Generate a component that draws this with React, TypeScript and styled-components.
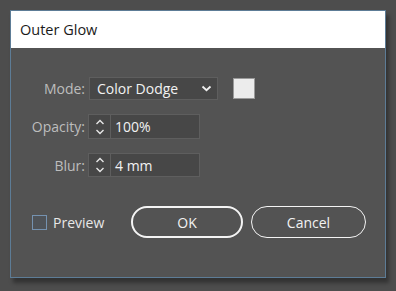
import React from "react";
import styled, { createGlobalStyle } from "styled-components";

const Global = createGlobalStyle`
  html, body {
    margin: 0;
    padding: 0;
    background: #4d4d4d;
    width: 396px;
    height: 291px;
    overflow: hidden;
  }
  * { box-sizing: border-box; }
`;

const Page = styled.div`
  padding: 10px 0 0 10px;
  font-family: "Open Sans", "Noto Sans", sans-serif;
`;

const Window = styled.div`
  width: 376px;
  height: 268px;
  border: 1px solid #5d7c96;
  background: #535353;
  box-shadow: 3px 5px 4px rgba(0, 0, 0, 0.35);
  display: flex;
  flex-direction: column;
`;

const TitleBar = styled.div`
  height: 37px;
  background: #ffffff;
  color: #1a1a1a;
  font-size: 14.5px;
  display: flex;
  align-items: center;
  padding-left: 9px;
  padding-bottom: 1px;
`;

const Body = styled.div`
  flex: 1;
  display: flex;
  flex-direction: column;
  padding-top: 29px;
`;

const Form = styled.div`
  display: grid;
  grid-template-columns: 74px auto;
  column-gap: 3px;
  row-gap: 14px;
  align-items: center;
`;

const Label = styled.div`
  text-align: right;
  color: #bdbdbd;
  font-size: 14px;
`;

const FieldRow = styled.div`
  display: flex;
  align-items: center;
  gap: 15px;
`;

const Select = styled.div`
  width: 129px;
  height: 23px;
  margin-left: 1px;
  background: #474747;
  border: 1px solid #5e5e5e;
  display: flex;
  align-items: center;
  justify-content: space-between;
  padding: 0 5px 0 7px;
  color: #f2f2f2;
  font-size: 14px;
`;

const Swatch = styled.div`
  width: 22px;
  height: 21px;
  background: #ececec;
  border: 1px solid #9a9a9a;
`;

const SpinField = styled.div<{ $h: number }>`
  width: 112px;
  height: ${(p) => p.$h}px;
  border: 1px solid #5e5e5e;
  background: #474747;
  display: flex;
  align-items: stretch;
`;

const Spinner = styled.div`
  width: 22px;
  border-right: 1px solid #5e5e5e;
  display: flex;
  align-items: center;
  justify-content: center;
`;

const Value = styled.div`
  display: flex;
  align-items: center;
  padding-left: 4px;
  color: #f2f2f2;
  font-size: 14px;
`;

const Footer = styled.div`
  display: flex;
  align-items: center;
  margin-top: 29px;
  padding-left: 21px;
`;

const Check = styled.label`
  display: flex;
  align-items: center;
  gap: 6px;
  color: #e8e8e8;
  font-size: 14px;
  width: 99px;
`;

const Box = styled.span`
  width: 15px;
  height: 15px;
  border: 1px solid #7592b0;
  background: #4f5358;
`;

const Button = styled.button<{ $primary?: boolean; $w: number }>`
  width: ${(p) => p.$w}px;
  height: 32px;
  border-radius: 16px;
  background: transparent;
  color: #f2f2f2;
  font-family: "Open Sans", "Noto Sans", sans-serif;
  font-size: 14px;
  border: ${(p) => (p.$primary ? "2px" : "1px")} solid #f4f4f4;
  padding: 0;
  margin-right: 8px;
`;

const Chevron = () => (
  <svg width="11" height="7" viewBox="0 0 11 7">
    <path d="M1.5 1.5 L5.5 5.2 L9.5 1.5" fill="none" stroke="#f0f0f0" strokeWidth="1.8" />
  </svg>
);

const UpDown = () => (
  <svg width="10" height="18" viewBox="0 0 10 18">
    <path d="M1.5 6 L5 2.5 L8.5 6 M1.5 12 L5 15.5 L8.5 12" fill="none" stroke="#e6e6e6" strokeWidth="1.4" />
  </svg>
);

export default function App() {
  return (
    <Page>
      <Global />
      <Window>
        <TitleBar>Outer Glow</TitleBar>
        <Body>
          <Form>
            <Label>Mode:</Label>
            <FieldRow>
              <Select>
                Color Dodge
                <Chevron />
              </Select>
              <Swatch />
            </FieldRow>
            <Label>Opacity:</Label>
            <SpinField $h={25}>
              <Spinner>
                <UpDown />
              </Spinner>
              <Value>100%</Value>
            </SpinField>
            <Label>Blur:</Label>
            <SpinField $h={24}>
              <Spinner>
                <UpDown />
              </Spinner>
              <Value>4 mm</Value>
            </SpinField>
          </Form>
          <Footer>
            <Check>
              <Box />
              Preview
            </Check>
            <Button $primary $w={112}>OK</Button>
            <Button $w={115}>Cancel</Button>
          </Footer>
        </Body>
      </Window>
    </Page>
  );
}
